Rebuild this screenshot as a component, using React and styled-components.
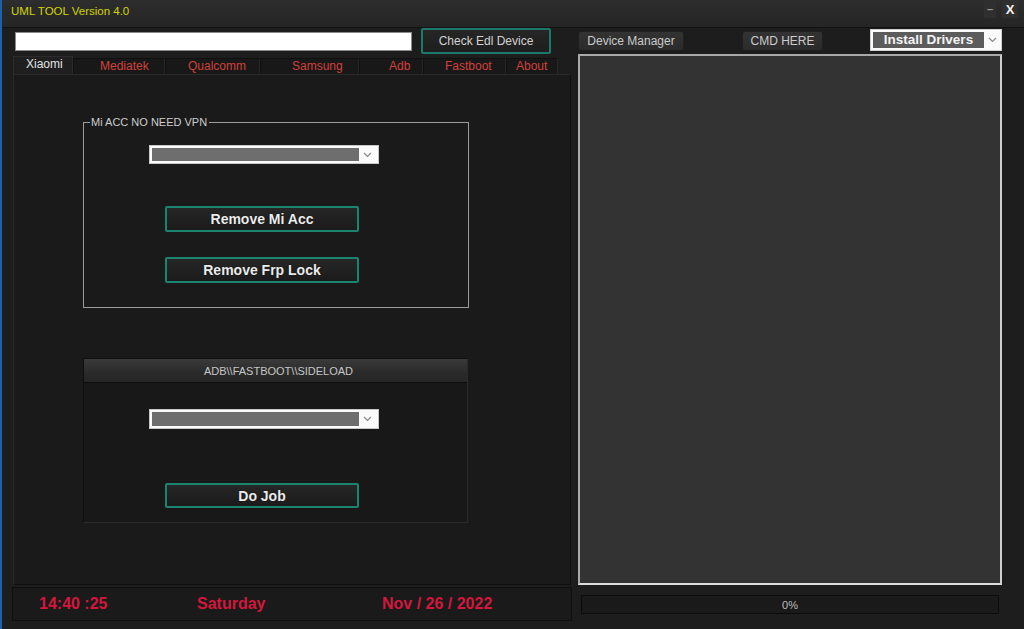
import React from "react";
import styled, { createGlobalStyle } from "styled-components";

const Global = createGlobalStyle`
  html, body { margin: 0; padding: 0; background: #1c1c1c; }
  body { font-family: "Liberation Sans", Arial, sans-serif; overflow: hidden; }
  #root { width: 1024px; height: 629px; }
`;

const Window = styled.div`
  width: 1024px;
  height: 629px;
  box-sizing: border-box;
  border-left: 2px solid #1a62ad;
  background: #1d1d1d;
  display: flex;
  flex-direction: column;
  overflow: hidden;
`;

const TitleBar = styled.div`
  height: 28px;
  flex-shrink: 0;
  box-sizing: border-box;
  border-bottom: 1px solid #121212;
  background: linear-gradient(#2d2d2d, #252525);
  display: flex;
  align-items: flex-start;
  justify-content: space-between;
  padding: 0 6px 0 9px;
`;

const Title = styled.span`
  margin-top: 5px;
  font-size: 11.5px;
  color: #d4d400;
`;

const WinButtons = styled.div`
  display: flex;
  gap: 6px;
`;

const WinButton = styled.div`
  width: ${(p) => p.w}px;
  height: 18px;
  background: #2f2f2f;
  color: ${(p) => p.c};
  font-size: ${(p) => p.fs}px;
  font-weight: bold;
  display: flex;
  align-items: center;
  justify-content: center;
`;

const Main = styled.div`
  display: flex;
  padding-left: 10px;
  gap: 6px;
`;

const LeftCol = styled.div`
  width: 560px;
  display: flex;
  flex-direction: column;
`;

const TopRow = styled.div`
  height: 26px;
  display: flex;
  align-items: center;
  padding-left: 3px;
  gap: 9px;
`;

const TextInput = styled.div`
  width: 397px;
  height: 19px;
  box-sizing: border-box;
  background: #fff;
  border: 1px solid #8a8a8a;
`;

const EdlButton = styled.div`
  width: 130px;
  height: 26px;
  box-sizing: border-box;
  border: 2px solid #1c7868;
  border-radius: 2px;
  background: linear-gradient(#262626, #1e1e1e);
  color: #d2d2d2;
  font-size: 12px;
  display: flex;
  align-items: center;
  justify-content: center;
`;

const TabStrip = styled.div`
  margin-top: 2px;
  height: 18px;
  display: flex;
  align-items: flex-end;
  padding-left: 1px;
`;

const Tab = styled.div`
  width: ${(p) => p.w}px;
  height: ${(p) => (p.active ? 18 : 16)}px;
  box-sizing: border-box;
  padding-left: ${(p) => p.pl}px;
  font-size: 12px;
  line-height: 15px;
  white-space: nowrap;
  color: ${(p) => (p.active ? "#e2e2e2" : "#d2413a")};
  background: ${(p) => (p.active ? "#1f1f1f" : "#181818")};
  border: 1px solid ${(p) => (p.active ? "#2c2c2c" : "#101010")};
  border-bottom: none;
  border-right-color: ${(p) => (p.active ? "#2c2c2c" : "#262626")};
`;

const TabPage = styled.div`
  margin-left: 1px;
  width: 558px;
  height: 511px;
  box-sizing: border-box;
  background: #1a1a1a;
  border: 1px solid #2a2a2a;
  border-right-color: #101010;
  border-bottom-color: #101010;
  display: flex;
  flex-direction: column;
  padding-left: 69px;
`;

const GroupBox = styled.div`
  position: relative;
  margin-top: 47px;
  width: 386px;
  height: 186px;
  box-sizing: border-box;
  border: 1px solid #9c9c9c;
  display: flex;
  flex-direction: column;
`;

const Legend = styled.span`
  position: absolute;
  top: -7px;
  left: 6px;
  padding: 0 2px 0 1px;
  background: #1a1a1a;
  color: #cdcdcd;
  font-size: 11px;
  line-height: 13px;
`;

const ComboBox = styled.div`
  margin-top: ${(p) => p.mt}px;
  margin-left: 65px;
  width: 230px;
  height: ${(p) => p.h}px;
  box-sizing: border-box;
  background: #fafafa;
  border: 1px solid #c8c8c8;
  padding: 2px;
  display: flex;
`;

const ComboFill = styled.div`
  flex: 1;
  background: #6e6e6e;
`;

const ComboArrow = styled.div`
  width: 17px;
  display: flex;
  align-items: center;
  justify-content: center;
`;

const ActionButton = styled.div`
  margin-top: ${(p) => p.mt}px;
  margin-left: 81px;
  width: 194px;
  height: ${(p) => p.h}px;
  box-sizing: border-box;
  border: 2px solid #1a846e;
  border-radius: 2px;
  background: linear-gradient(#262626, #1b1b1b);
  color: #ececec;
  font-size: 14px;
  font-weight: bold;
  text-shadow: 0 0 1px #000;
  display: flex;
  align-items: center;
  justify-content: center;
`;

const AdbPanel = styled.div`
  margin-top: 50px;
  width: 385px;
  height: 165px;
  box-sizing: border-box;
  background: #181818;
  border: 1px solid #0f0f0f;
  border-right-color: #2a2a2a;
  border-bottom-color: #2a2a2a;
  display: flex;
  flex-direction: column;
`;

const AdbHeader = styled.div`
  height: 23px;
  flex-shrink: 0;
  background: linear-gradient(#3a3a3a, #2a2a2a 60%, #262626);
  border-bottom: 1px solid #0d0d0d;
  color: #c6c6c6;
  font-size: 11px;
  display: flex;
  align-items: center;
  justify-content: center;
  padding-left: 6px;
`;

const StatusBar = styled.div`
  margin-top: 2px;
  height: 34px;
  box-sizing: border-box;
  background: #1a1a1a;
  border: 1px solid #0f0f0f;
  display: flex;
  align-items: center;
  padding-left: 26px;
`;

const StatusText = styled.span`
  width: ${(p) => p.w}px;
  color: #d4173c;
  font-size: 16px;
  font-weight: bold;
  white-space: nowrap;
`;

const RightCol = styled.div`
  width: 424px;
  display: flex;
  flex-direction: column;
`;

const RightTop = styled.div`
  margin-top: 1px;
  height: 22px;
  display: flex;
  align-items: flex-end;
`;

const GrayButton = styled.div`
  margin-left: ${(p) => p.ml}px;
  width: ${(p) => p.w}px;
  height: 20px;
  box-sizing: border-box;
  background: linear-gradient(#333, #2b2b2b);
  border: 1px solid #202020;
  border-radius: 3px;
  color: #cacaca;
  font-size: 12px;
  display: flex;
  align-items: center;
  justify-content: center;
`;

const DriverCombo = styled.div`
  margin-left: 47px;
  width: 132px;
  height: 22px;
  box-sizing: border-box;
  background: #fbfbfb;
  border: 1px solid #d0d0d0;
  padding: 2px 0 2px 2px;
  display: flex;
`;

const DriverLabel = styled.div`
  width: 111px;
  background: #5c5c5c;
  color: #f4f4f4;
  font-size: 13.5px;
  font-weight: bold;
  line-height: 16px;
  display: flex;
  align-items: center;
  justify-content: center;
`;

const LogPanel = styled.div`
  margin-top: 3px;
  height: 531px;
  box-sizing: border-box;
  background: #333333;
  border: 2px solid #a9a9a9;
  border-right-color: #cfcfcf;
  border-bottom-color: #dcdcdc;
`;

const Progress = styled.div`
  margin-top: 10px;
  margin-left: 3px;
  width: 418px;
  height: 19px;
  box-sizing: border-box;
  background: #1a1a1a;
  border: 1px solid #0c0c0c;
  color: #bdbdbd;
  font-size: 11px;
  display: flex;
  align-items: center;
  justify-content: center;
`;

const Chevron = () => (
  <svg width="9" height="6" viewBox="0 0 9 6">
    <polyline points="1,1 4.5,4.5 8,1" fill="none" stroke="#8a8a8a" strokeWidth="1.2" />
  </svg>
);

const tabs = [
  { label: "Xiaomi", w: 60, pl: 12, active: true },
  { label: "Mediatek", w: 92, pl: 26 },
  { label: "Qualcomm", w: 95, pl: 22 },
  { label: "Samsung", w: 99, pl: 31 },
  { label: "Adb", w: 64, pl: 29 },
  { label: "Fastboot", w: 83, pl: 21 },
  { label: "About", w: 52, pl: 9 },
];

export default function App() {
  return (
    <>
      <Global />
      <Window>
        <TitleBar>
          <Title>UML TOOL Version 4.0</Title>
          <WinButtons>
            <WinButton w={12} fs={11} c="#9a9a9a">–</WinButton>
            <WinButton w={16} fs={13} c="#f2f2f2">X</WinButton>
          </WinButtons>
        </TitleBar>
        <Main>
          <LeftCol>
            <TopRow>
              <TextInput />
              <EdlButton>Check Edl Device</EdlButton>
            </TopRow>
            <TabStrip>
              {tabs.map((t) => (
                <Tab key={t.label} w={t.w} pl={t.pl} active={t.active}>
                  {t.label}
                </Tab>
              ))}
            </TabStrip>
            <TabPage>
              <GroupBox>
                <Legend>Mi ACC NO NEED VPN</Legend>
                <ComboBox mt={22} h={19}>
                  <ComboFill />
                  <ComboArrow>
                    <Chevron />
                  </ComboArrow>
                </ComboBox>
                <ActionButton mt={42} h={26}>Remove Mi Acc</ActionButton>
                <ActionButton mt={25} h={26}>Remove Frp Lock</ActionButton>
              </GroupBox>
              <AdbPanel>
                <AdbHeader>{"ADB\\\\FASTBOOT\\\\SIDELOAD"}</AdbHeader>
                <ComboBox mt={26} h={20}>
                  <ComboFill />
                  <ComboArrow>
                    <Chevron />
                  </ComboArrow>
                </ComboBox>
                <ActionButton mt={54} h={25}>Do Job</ActionButton>
              </AdbPanel>
            </TabPage>
            <StatusBar>
              <StatusText w={158}>14:40 :25</StatusText>
              <StatusText w={185}>Saturday</StatusText>
              <StatusText w={130}>Nov / 26 / 2022</StatusText>
            </StatusBar>
          </LeftCol>
          <RightCol>
            <RightTop>
              <GrayButton ml={0} w={106}>Device Manager</GrayButton>
              <GrayButton ml={58} w={81}>CMD HERE</GrayButton>
              <DriverCombo>
                <DriverLabel>Install Drivers</DriverLabel>
                <ComboArrow>
                  <Chevron />
                </ComboArrow>
              </DriverCombo>
            </RightTop>
            <LogPanel />
            <Progress>0%</Progress>
          </RightCol>
        </Main>
      </Window>
    </>
  );
}
